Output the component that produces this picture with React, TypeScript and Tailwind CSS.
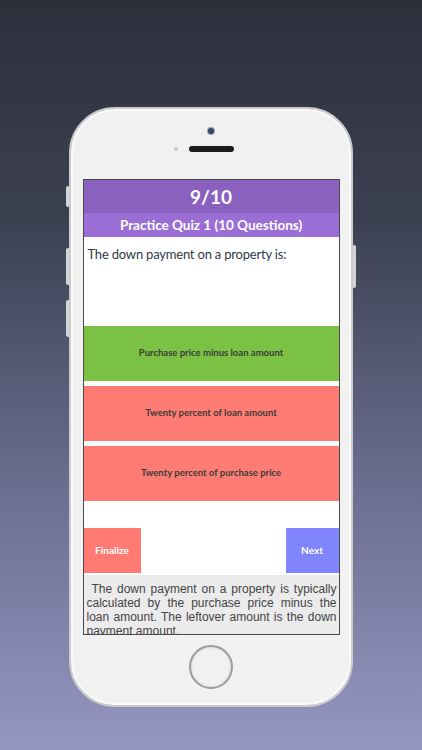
const options = [
  { label: "Purchase price minus loan amount", tone: "bg-[#7bc244]" },
  { label: "Twenty percent of loan amount", tone: "bg-[#ff7c74]" },
  { label: "Twenty percent of purchase price", tone: "bg-[#ff7c74]" },
];

const avenir = "font-['Lato','Noto_Sans',sans-serif]";

function SideButton({ side, top, height }: { side: "left" | "right"; top: string; height: string }) {
  return (
    <span
      aria-hidden
      className={`absolute w-[4px] rounded-[2px] bg-[#d4d4d6] ${side === "left" ? "-left-[3px]" : "-right-[3px]"} ${top} ${height}`}
    />
  );
}

function Screen() {
  return (
    <div className="flex h-[456px] w-[257px] flex-col overflow-hidden border-[1.5px] border-[#4a4a4a] bg-white">
      <div className={`flex h-[33px] items-center justify-center bg-[#8a61bf] pt-[2px] text-[19px] font-bold text-white ${avenir}`}>
        9/10
      </div>
      <div className={`flex h-[24px] items-center justify-center bg-[#9b6ed5] text-[13.5px] font-bold text-white ${avenir}`}>
        Practice Quiz 1 (10 Questions)
      </div>
      <div className={`h-[89px] px-[4px] pt-[8px] text-[13px] leading-[18px] tracking-[-0.2px] text-[#323848] ${avenir}`}>
        The down payment on a property is:
      </div>
      <div className="flex flex-col gap-[5px]">
        {options.map((o) => (
          <button
            key={o.label}
            className={`flex h-[55px] w-full items-center justify-center text-[9.5px] font-bold text-[#3b3b3b] ${o.tone} ${avenir}`}
          >
            {o.label}
          </button>
        ))}
      </div>
      <div className="h-[27px]" />
      <div className="flex h-[45px] justify-between">
        <button className={`w-[57px] bg-[#ff7a72] text-[10px] font-bold text-white ${avenir}`}>Finalize</button>
        <button className={`w-[53px] bg-[#8085fe] text-[10px] font-bold text-white ${avenir}`}>Next</button>
      </div>
      <div className="mt-[2px] flex-1 overflow-hidden bg-[#ebebeb] pl-[3px] pr-[2px] pt-[7px]">
        <p className="text-justify font-['Liberation_Sans',Arial,sans-serif] text-[12px] leading-[14px] text-[#444]">
          {"\u00a0The down payment on a property is typically calculated by the purchase price minus the loan amount. The leftover amount is the down payment amount."}
        </p>
      </div>
    </div>
  );
}

export default function App() {
  return (
    <div className="flex h-[750px] w-full justify-center overflow-hidden bg-[linear-gradient(to_bottom,#2d303b_0%,#3c4152_30%,#646888_60%,#9597c2_100%)] pt-[107px]">
      <div className="relative h-[600px] w-[284px]">
        <SideButton side="left" top="top-[79px]" height="h-[21px]" />
        <SideButton side="left" top="top-[141px]" height="h-[37px]" />
        <SideButton side="left" top="top-[193px]" height="h-[37px]" />
        <SideButton side="right" top="top-[138px]" height="h-[43px]" />
        <div className="relative flex h-full w-full flex-col items-center rounded-[46px] border-[2px] border-[#cbcbcd] bg-[#f1f1f1] shadow-[inset_0_0_0_2px_#fafafa]">
          <span className="mt-[19px] h-[6px] w-[6px] rounded-full bg-[#2f4a66] ring-1 ring-[#9aa3ad]" />
          <div className="relative mt-[12px] flex w-full justify-center">
            <span className="absolute left-[103px] top-[1px] h-[4px] w-[4px] rounded-full bg-[#c9c9c9]" />
            <span className="h-[6px] w-[45px] rounded-full bg-[#1c1c1c]" />
          </div>
          <div className="mt-[27px]">
            <Screen />
          </div>
          <span className="mt-[10px] h-[44px] w-[44px] rounded-full border-[2.5px] border-[#9c9c9c] bg-[#f1f1f1] shadow-[inset_0_0_2px_#bbb]" />
        </div>
      </div>
    </div>
  );
}
